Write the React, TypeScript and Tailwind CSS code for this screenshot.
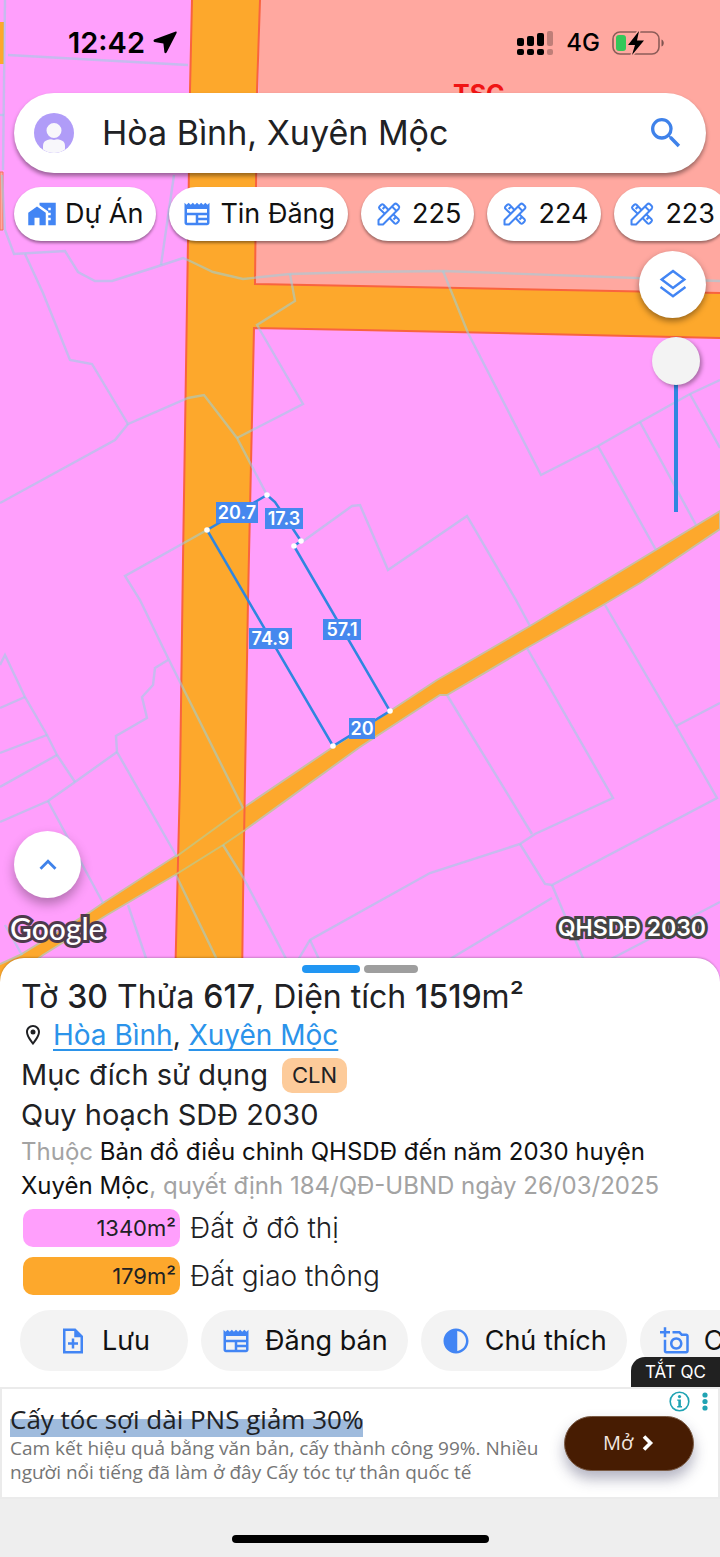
import React, { useState } from "react";
import {
  MdContrast,
  MdHomeWork,
  MdKeyboardArrowUp,
  MdNewspaper,
  MdOutlineAddAPhoto,
  MdOutlineLocationOn,
  MdSearch,
} from "react-icons/md";

const CHIPS = [
  { label: "Dự Án", Icon: MdHomeWork },
  { label: "Tin Đăng", Icon: MdNewspaper },
  { label: "225", Icon: MeasureIcon },
  { label: "224", Icon: MeasureIcon },
  { label: "223", Icon: MeasureIcon },
];

const ACTIONS = [
  { label: "Lưu", Icon: SaveIcon },
  { label: "Đăng bán", Icon: MdNewspaper },
  { label: "Chú thích", Icon: MdContrast },
  { label: "C", Icon: MdOutlineAddAPhoto },
];

const LAND_USES = [
  { area: "1340m²", name: "Đất ở đô thị", color: "bg-[#ff9ffc]" },
  { area: "179m²", name: "Đất giao thông", color: "bg-[#fda82c]" },
];

// Neighbouring parcel boundaries, in map units
const PARCEL_LINES = [
  "M5 0L3 170",
  "M8 55L188 65",
  "M0 115H4",
  "M2 175L5 230L14 254L65 251L78 272L95 281H112L162 265L183 258L190 261L213 272L243 279L290 274L360 272L443 271L720 281",
  "M174 175L161 265",
  "M25 254L43 293L70 360L92 364L128 424L188 398L204 395L237 438L267 495",
  "M128 424L115 440L0 503",
  "M290 274L295 301L257 325L303 404L237 438",
  "M207 530L125 576L140 600L168 658L243 808",
  "M168 660L155 668L153 685L142 697L147 718L116 736L117 752L177 857",
  "M117 752L75 782L48 801L0 822",
  "M0 665L5 655L25 697L47 735L57 755L75 782",
  "M25 697L0 708M47 735L0 753M57 755L0 787",
  "M48 801L103 903M5 925L22 955",
  "M128 905L150 970M176 875L222 970M223 845L243 877L292 970",
  "M302 542L352 506L360 505L388 570L467 516L516 600L530 626",
  "M443 271L468 333L541 475L598 446L640 422L690 394L720 380",
  "M598 446L656 550M640 422L696 525M690 394L720 448",
  "M447 695L532 834",
  "M527 648L613 798L535 834L520 844L430 873L360 912L310 940L298 960",
  "M520 844L545 884L552 885L717 798L676 726L605 605",
  "M676 726L720 703M552 885L588 970M552 898L440 965M720 902L590 970M310 940L324 970",
];

const CORNERS = [
  [207, 530],
  [267, 495],
  [301, 541],
  [294, 546],
  [390, 711],
  [333, 746],
];

const EDGES = [
  { text: "20.7", x: 216, y: 502, w: 42 },
  { text: "17.3", x: 265, y: 508, w: 38 },
  { text: "74.9", x: 249, y: 628, w: 43 },
  { text: "57.1", x: 323, y: 619, w: 38 },
  { text: "20", x: 349, y: 718, w: 26 },
];

type IconProps = { size: number; className?: string };

function SaveIcon({ size, className }: IconProps) {
  return (
    <svg className={className} width={size} height={size} viewBox="0 0 24 24" fill="currentColor">
      <path d="M14 2H4v20h16V8l-6-6zm4 18H6V4h7v5h5v11z" />
      <path d="M11 10h2v3h3v2h-3v3h-2v-3H8v-2h3z" />
    </svg>
  );
}

function MeasureIcon({ size, className }: IconProps) {
  return (
    <svg
      className={className}
      width={size}
      height={size}
      viewBox="0 0 24 24"
      fill="none"
      stroke="currentColor"
      strokeWidth="1.6"
      strokeLinejoin="round"
    >
      <path d="M3.6 20.4V16.8L16.2 4.2Q17.3 3.2 18.4 4.2L19.8 5.6Q20.8 6.7 19.8 7.8L7.2 20.4Z" />
      <path d="M14.4 6L18 9.6" />
      <path d="M11.6 8.8L7.6 4.6Q6.7 3.8 5.8 4.6L4.4 6Q3.6 6.9 4.4 7.8L8.6 11.8M8.9 6L6.9 8" />
      <path d="M15.4 12.2L19.6 16.2Q20.4 17.1 19.6 18L18.2 19.4Q17.3 20.2 16.4 19.4L12.4 15.2M17.6 14.4L15.6 16.4" />
    </svg>
  );
}

function LayersIcon() {
  return (
    <svg width="34" height="34" viewBox="0 0 24 24" fill="none" stroke="currentColor" strokeWidth="1.7">
      <path d="M12 2.1L20 8.1L12 14.1L4 8.1Z" />
      <path d="M3.2 13.4L12 20L20.8 13.4" />
    </svg>
  );
}

function PlanningMap() {
  return (
    <svg
      className="absolute inset-0 h-full w-full"
      viewBox="0 0 720 985"
      preserveAspectRatio="xMidYMin slice"
      role="img"
      aria-label="Bản đồ quy hoạch"
    >
      <rect width="720" height="985" fill="#ff9ffc" />
      <path d="M0 22H4V64H0Z" fill="#fda82c" />
      <path d="M0 172H3V230H0Z" fill="#ffa8a0" stroke="#f5705f" />
      <path d="M260 0L255 284L720 293V0Z" fill="#ffa8a0" />

      {/* Roads */}
      <path
        d="M720 511L573 600L530 626L437 680L390 711L333 747L243 808L177 855L103 903L90 912L20 955L-4 966V992L20 972L43 955L107 915L175 875L223 845L245 830L360 747L440 695L447 695L527 648L603 605L640 583L720 529Z"
        fill="#fda82c"
        stroke="#c9bfa4"
        strokeWidth="2"
      />
      <path
        d="M192 0L190 90L188 240L183 560L180 780L175 985H242L243 900L248 600L254 328L360 330L720 338V293L360 286L255 284L257 90L260 0Z"
        fill="#fda82c"
      />
      <path
        d="M192 0L190 90L188 240L183 560L180 780L175 985M242 985L243 900L248 600L254 328L360 330L720 338M720 293L360 286L255 284L257 90L260 0"
        fill="none"
        stroke="#f9633f"
        strokeWidth="2"
      />
      <path d="M177 856L243 808M175 875L223 845L245 830" fill="none" stroke="#cfc070" strokeWidth="2" />

      <g fill="none" stroke="#98d2e2" strokeOpacity="0.55" strokeWidth="2.4">
        {PARCEL_LINES.map((d) => (
          <path key={d} d={d} />
        ))}
      </g>

      <text x="453" y="103" fontSize="25" fontWeight="700" fontFamily="Inter, sans-serif" fill="#f01414">
        TSC
      </text>

      {/* Selected parcel */}
      <path
        d="M207 530L267 495L275 502L301 541L294 546L390 711L333 746Z"
        fill="none"
        stroke="#2f86e0"
        strokeWidth="2.5"
      />
      {CORNERS.map(([x, y]) => (
        <circle key={x} cx={x} cy={y} r="2.8" fill="#fff" />
      ))}
      {EDGES.map((edge) => (
        <g key={edge.text}>
          <rect x={edge.x} y={edge.y} width={edge.w} height="21" fill="#4688ee" />
          <text
            x={edge.x + edge.w / 2}
            y={edge.y + 17}
            textAnchor="middle"
            fontSize="18"
            fontWeight="600"
            fontFamily="Inter, sans-serif"
            fill="#fff"
          >
            {edge.text}
          </text>
        </g>
      ))}
    </svg>
  );
}

function StatusBar() {
  return (
    <header className="flex h-[93px] items-center justify-between pr-[55px] pb-2 pl-[68px] text-black">
      <div className="flex items-center gap-2">
        <span className="text-[29px] leading-8 font-semibold">12:42</span>
        <svg width="24" height="24" viewBox="0 0 24 24" fill="currentColor">
          <path d="M22.8 .6L1.2 8.6Q-.2 9.8 1.4 11L10.4 12.4L11.4 21.2Q12 23 13.6 21.6L23.6 2Q24 .2 22.8 .6Z" />
        </svg>
      </div>
      <div className="flex items-center gap-3">
        <svg width="37" height="26" viewBox="0 0 37 26" fill="currentColor">
          <rect x="0" y="8" width="7" height="8" rx="2" />
          <rect x="10" y="6" width="7" height="10" rx="2" />
          <rect x="20" y="3" width="7" height="13" rx="2" />
          <rect x="0" y="19" width="7" height="6" rx="2" />
          <rect x="10" y="19" width="7" height="6" rx="2" />
          <rect x="20" y="19" width="7" height="6" rx="2" />
          <rect x="30" y="1" width="6" height="15" rx="2" opacity="0.25" />
          <rect x="30" y="19" width="6" height="6" rx="2" opacity="0.25" />
        </svg>
        <span className="text-[24px] leading-8 font-medium">4G</span>
        <svg width="53" height="26" viewBox="0 0 53 26">
          <rect x="1" y="2" width="46" height="22" rx="7" fill="none" stroke="#000" strokeOpacity="0.45" strokeWidth="1.6" />
          <path d="M49.5 9.5C52.5 10.5 52.5 15.5 49.5 16.5Z" fill="#000" fillOpacity="0.5" />
          <rect x="4" y="5" width="10" height="16" rx="3" fill="#34c759" />
          <path d="M27 1L16 15H23L20 25L32 10.5H25Z" fill="#000" stroke="#ffa8a0" strokeWidth="3" paintOrder="stroke" strokeLinejoin="round" />
        </svg>
      </div>
    </header>
  );
}

export default function App() {
  const [query, setQuery] = useState("Hòa Bình, Xuyên Mộc");
  const [opacity, setOpacity] = useState(0);

  return (
    <div className="flex min-h-screen w-full flex-col overflow-hidden bg-[#eeeeee] font-['Inter',sans-serif] text-[#202124]">
      <section className="relative flex flex-1 flex-col">
        <PlanningMap />
        <div className="relative flex flex-1 flex-col">
          <StatusBar />

          <form
            className="mx-3.5 flex h-20 items-center rounded-full bg-white px-5 shadow-[0_3px_4px_rgba(0,0,0,0.4)]"
            onSubmit={(e) => e.preventDefault()}
          >
            <button type="button" aria-label="Tài khoản" className="shrink-0">
              <svg width="40" height="40" viewBox="0 0 40 40">
                <circle cx="20" cy="20" r="20" fill="#b09cf8" />
                <path d="M9 36.5V33C9 28 13 26 20 26C27 26 31 28 31 33V36.5Q26 40 20 40Q14 40 9 36.5Z" fill="#f8f7fb" />
                <circle cx="20" cy="17.5" r="8.5" fill="#f8f7fb" stroke="#b09cf8" strokeWidth="2" />
              </svg>
            </button>
            <input
              type="text"
              aria-label="Tìm kiếm"
              value={query}
              onChange={(e) => setQuery(e.target.value)}
              className="ml-7 min-w-0 flex-1 bg-transparent text-[34px] leading-10 outline-none"
            />
            <button type="submit" aria-label="Tìm" className="shrink-0 text-[#3f82ea]">
              <MdSearch size={40} />
            </button>
          </form>

          <div className="flex gap-[13px] overflow-x-auto px-3.5 pt-3.5 pb-2.5 [scrollbar-width:none]">
            {CHIPS.map(({ label, Icon }) => (
              <button
                key={label}
                className="flex h-[54px] shrink-0 items-center gap-2 rounded-full bg-white px-[13px] text-[27px] leading-8 whitespace-nowrap text-[#111111] shadow-[0_2px_3px_rgba(0,0,0,0.4)]"
              >
                <Icon size={30} className="text-[#4285f4]" />
                {label}
              </button>
            ))}
          </div>

          <div className="flex flex-col items-end gap-[19px] pr-3.5">
            <button
              aria-label="Lớp bản đồ"
              className="flex size-[67px] items-center justify-center rounded-full bg-white text-[#4285f4] shadow-[0_3px_6px_rgba(0,0,0,0.4)]"
            >
              <LayersIcon />
            </button>
            <input
              type="range"
              aria-label="Độ trong suốt"
              min={0}
              max={100}
              value={opacity}
              onChange={(e) => setOpacity(Number(e.target.value))}
              className="mr-1.5 h-[175px] w-12 appearance-none bg-[linear-gradient(#2f86e0,#2f86e0)] bg-[size:4px_100%] bg-center bg-no-repeat [writing-mode:vertical-lr] [&::-webkit-slider-thumb]:size-12 [&::-webkit-slider-thumb]:appearance-none [&::-webkit-slider-thumb]:rounded-full [&::-webkit-slider-thumb]:bg-[#f3f3f3] [&::-webkit-slider-thumb]:shadow-[2px_2px_4px_rgba(0,0,0,0.35)]"
            />
          </div>

          <div className="mt-auto px-3.5">
            <button
              aria-label="Mở rộng"
              className="flex size-[67px] items-center justify-center rounded-full bg-white text-[#3f82ea] shadow-[0_6px_12px_rgba(0,0,0,0.3)]"
            >
              <MdKeyboardArrowUp size={34} />
            </button>
          </div>
          <div className="flex items-center justify-between pt-3 pr-3.5 pb-9 pl-2.5 leading-9 text-white [paint-order:stroke_fill]">
            <span className="text-[30px] font-medium font-['Lato',sans-serif] [-webkit-text-stroke:6px_#4d3a4c]">Google</span>
            <span className="text-[23px] font-semibold [-webkit-text-stroke:6px_#444444]">QHSDĐ 2030</span>
          </div>
        </div>
      </section>

      <main className="relative -mt-6 rounded-t-[24px] bg-white shadow-[0_-1px_2px_rgba(0,0,0,0.2)]">
        <div className="flex justify-center gap-1 pt-[7px]">
          <span className="h-2 w-[58px] rounded-full bg-[#2196f3]" />
          <span className="h-2 w-[54px] rounded-full bg-[#9e9e9e]" />
        </div>

        <div className="px-[21px] pt-1">
          <h1 className="text-[32px] leading-10">
            Tờ <span className="font-medium">30</span> Thửa <span className="font-medium">617</span>, Diện tích{" "}
            <span className="font-medium">1519</span>m²
          </h1>
          <p className="flex items-center text-[28px] leading-9">
            <MdOutlineLocationOn size={24} className="mr-2" />
            <span>
              <a href="#hoa-binh" className="text-[#2b93ea] underline decoration-2 underline-offset-4 [text-decoration-skip-ink:none]">Hòa Bình</a>,{" "}
              <a href="#xuyen-moc" className="text-[#2b93ea] underline decoration-2 underline-offset-4 [text-decoration-skip-ink:none]">Xuyên Mộc</a>
            </span>
          </p>
          <p className="flex items-center gap-3.5 pt-0.5 text-[29px] leading-10">
            Mục đích sử dụng
            <span className="rounded-[10px] bg-[#fdcb9a] px-2.5 text-[22px] leading-[35px]">CLN</span>
          </p>
          <h2 className="text-[29px] leading-10">Quy hoạch SDĐ 2030</h2>
          <p className="text-[24px] leading-[34px] text-[#a3a3a3]">
            Thuộc <span className="text-[#111111]">Bản đồ điều chỉnh QHSDĐ đến năm 2030 huyện Xuyên Mộc</span>, quyết
            định 184/QĐ-UBND ngày 26/03/2025
          </p>
          <ul className="flex flex-col gap-2.5 px-0.5 pt-1.5">
            {LAND_USES.map((use) => (
              <li key={use.name} className="flex items-center gap-2.5 text-[28px] leading-[38px] font-light">
                <span className={`${use.color} w-[157px] rounded-[10px] pr-1 text-right text-[22px] leading-[38px] font-normal`}>
                  {use.area}
                </span>
                {use.name}
              </li>
            ))}
          </ul>
        </div>

        <div className="flex gap-[13px] overflow-x-auto pt-[15px] pb-4 pl-5 [scrollbar-width:none]">
          {ACTIONS.map(({ label, Icon }) => (
            <button
              key={label}
              className="flex h-[61px] min-w-[168px] shrink-0 items-center justify-center gap-3.5 rounded-full bg-[#f3f3f3] px-5 text-[27px] leading-8 whitespace-nowrap text-[#111111] last:justify-start"
            >
              <Icon size={30} className="text-[#4285f4]" />
              {label}
            </button>
          ))}
        </div>
        <button className="absolute right-0 bottom-0 rounded-tl-[14px] bg-[#212121] px-3.5 text-[17px] leading-[30px] text-white">
          TẮT QC
        </button>
      </main>

      <aside className="relative flex h-[112px] items-center border-2 border-[#ebebeb] bg-white pr-6 pl-2 font-['Open_Sans',sans-serif]">
        <div className="min-w-0 flex-1">
          <h3 className="text-[26px] leading-[34px] text-[#202124]">
            <span className="bg-[linear-gradient(transparent_50%,#9fbbdd_50%)]">Cấy tóc sợi dài PNS giảm 30%</span>
          </h3>
          <p className="text-[19px] leading-6 text-[#757575]">
            Cam kết hiệu quả bằng văn bản, cấy thành công 99%. Nhiều người nổi tiếng đã làm ở đây Cấy tóc tự thân quốc tế
          </p>
        </div>
        <button className="ml-4 flex h-[55px] w-[130px] shrink-0 items-center justify-center gap-2 rounded-full border border-[#7a5b45] bg-[#471c02] text-[20px] leading-6 text-[#f3e8e0] shadow-[0_8px_14px_rgba(40,40,80,0.35)]">
          Mở
          <svg width="14" height="16" viewBox="0 0 14 16" fill="none" stroke="#fff" strokeWidth="3.6">
            <path d="M3 1.5L9.5 8L3 14.5" />
          </svg>
        </button>
        <div className="absolute top-0.5 right-2.5 flex items-center gap-3">
          <svg width="21" height="21" viewBox="0 0 21 21" fill="#20a3b3">
            <circle cx="10.5" cy="10.5" r="9.3" fill="none" stroke="#20a3b3" strokeWidth="1.6" />
            <circle cx="10.5" cy="5.6" r="1.6" />
            <path d="M8.2 8.4H11.9V15H13V16.4H8.2V15H9.3V9.8H8.2Z" />
          </svg>
          <svg width="6" height="21" viewBox="0 0 6 21" fill="#20a3b3">
            <circle cx="3" cy="4" r="2.6" />
            <circle cx="3" cy="10.5" r="2.6" />
            <circle cx="3" cy="17" r="2.6" />
          </svg>
        </div>
      </aside>

      <footer className="flex h-[58px] items-end justify-center pb-3.5">
        <span className="h-2 w-[257px] rounded-full bg-black" />
      </footer>
    </div>
  );
}
